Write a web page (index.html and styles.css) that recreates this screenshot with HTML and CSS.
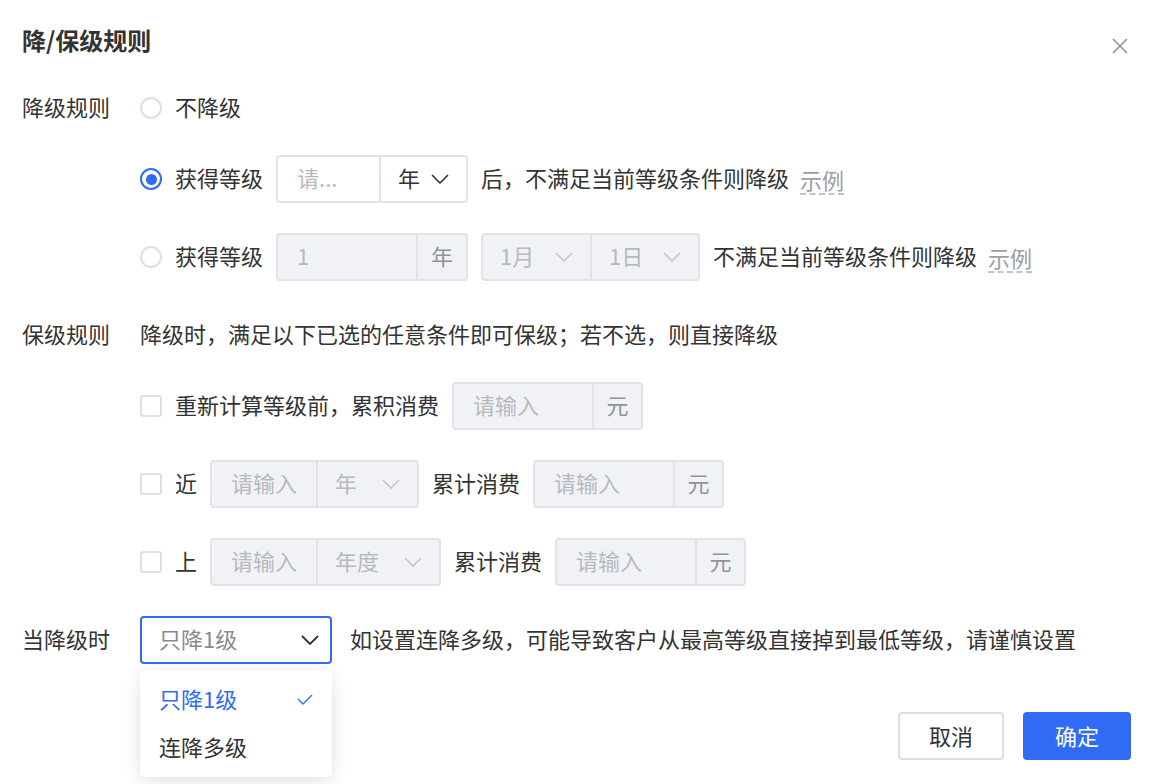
FILE: index.html
```html
<!DOCTYPE html>
<html lang="zh-CN">
<head>
  <meta charset="UTF-8" />
  <title>降/保级规则</title>
  <link rel="stylesheet" href="styles.css">
</head>
<body>
  <div class="dialog">
    <div class="header">
      <h2>降/保级规则</h2>
      <span class="close">
        <svg width="16" height="16" viewBox="0 0 16 16"><path d="M1 1L15 15M15 1L1 15" stroke="#8d929b" stroke-width="1.6" fill="none"/></svg>
      </span>
    </div>

    <div class="form-item item-down">
      <div class="label">降级规则</div>
      <div class="content">
        <div class="line">
          <span class="radio"></span><span class="txt">不降级</span>
        </div>
        <div class="line tall">
          <span class="radio checked"></span><span class="txt">获得等级</span>
          <div class="group">
            <span class="field placeholder" style="width:105px">请...</span>
            <span class="field select" style="width:89px">年<svg class="chev" width="18" height="10" viewBox="0 0 18 10"><path d="M1 1L9 9L17 1" stroke="#333" stroke-width="1.6" fill="none"/></svg></span>
          </div>
          <span class="txt">后，不满足当前等级条件则降级</span>
          <span class="example">示例</span>
        </div>
        <div class="line tall">
          <span class="radio"></span><span class="txt">获得等级</span>
          <div class="group disabled">
            <span class="field" style="width:142px">1</span>
            <span class="field addon" style="width:52px">年</span>
          </div>
          <div class="group disabled">
            <span class="field select" style="width:111px">1月<svg class="chev" width="18" height="10" viewBox="0 0 18 10"><path d="M1 1L9 9L17 1" stroke="#c3c6cc" stroke-width="1.6" fill="none"/></svg></span>
            <span class="field select" style="width:110px">1日<svg class="chev" width="18" height="10" viewBox="0 0 18 10"><path d="M1 1L9 9L17 1" stroke="#c3c6cc" stroke-width="1.6" fill="none"/></svg></span>
          </div>
          <span class="txt">不满足当前等级条件则降级</span>
          <span class="example">示例</span>
        </div>
      </div>
    </div>

    <div class="form-item item-keep">
      <div class="label">保级规则</div>
      <div class="content">
        <div class="line">
          <span class="txt">降级时，满足以下已选的任意条件即可保级；若不选，则直接降级</span>
        </div>
        <div class="line tall">
          <span class="checkbox"></span><span class="txt">重新计算等级前，累积消费</span>
          <div class="group disabled">
            <span class="field" style="width:142px">请输入</span>
            <span class="field addon" style="width:51px">元</span>
          </div>
        </div>
        <div class="line tall">
          <span class="checkbox"></span><span class="txt">近</span>
          <div class="group disabled">
            <span class="field" style="width:108px">请输入</span>
            <span class="field select" style="width:103px">年<svg class="chev" width="18" height="10" viewBox="0 0 18 10"><path d="M1 1L9 9L17 1" stroke="#c3c6cc" stroke-width="1.6" fill="none"/></svg></span>
          </div>
          <span class="txt">累计消费</span>
          <div class="group disabled">
            <span class="field" style="width:142px">请输入</span>
            <span class="field addon" style="width:51px">元</span>
          </div>
        </div>
        <div class="line tall">
          <span class="checkbox"></span><span class="txt">上</span>
          <div class="group disabled">
            <span class="field" style="width:108px">请输入</span>
            <span class="field select" style="width:125px">年度<svg class="chev" width="18" height="10" viewBox="0 0 18 10"><path d="M1 1L9 9L17 1" stroke="#c3c6cc" stroke-width="1.6" fill="none"/></svg></span>
          </div>
          <span class="txt">累计消费</span>
          <div class="group disabled">
            <span class="field" style="width:142px">请输入</span>
            <span class="field addon" style="width:51px">元</span>
          </div>
        </div>
      </div>
    </div>

    <div class="form-item item-when">
      <div class="label tall">当降级时</div>
      <div class="content">
        <div class="line tall">
          <div class="select-wrap">
            <span class="level-select">只降1级<svg width="18" height="10" viewBox="0 0 18 10"><path d="M1 1L9 9L17 1" stroke="#333" stroke-width="1.8" fill="none"/></svg></span>
            <div class="dropdown">
              <div class="option active">只降1级<svg width="16" height="11" viewBox="0 0 16 11"><path d="M1 5L6 10L15 1" stroke="#2f6bf5" stroke-width="1.4" fill="none"/></svg></div>
              <div class="option">连降多级</div>
            </div>
          </div>
          <span class="txt hint">如设置连降多级，可能导致客户从最高等级直接掉到最低等级，请谨慎设置</span>
        </div>
      </div>
    </div>

    <div class="footer">
      <button class="btn cancel">取消</button>
      <button class="btn primary">确定</button>
    </div>
  </div>
</body>
</html>
```

FILE: styles.css
```css
body {
  margin: 0;
  min-height: 784px;
  font-family: "Noto Sans CJK SC", "Noto Sans", sans-serif;
  font-size: 22px;
  color: #333;
  background-color: #fff;
}
.dialog {
  padding: 25px 23px 0 22px;
}
.header {
  display: flex;
  justify-content: space-between;
  align-items: flex-start;
  height: 34px;
}
.header h2 {
  margin: 0;
  font-size: 24px;
  font-weight: 700;
  line-height: 30px;
}
.close {
  display: flex;
  margin-top: 13px;
  margin-right: 3px;
}
.form-item {
  display: flex;
}
.item-down {
  margin-top: 32px;
}
.item-keep {
  margin-top: 37px;
}
.item-when {
  margin-top: 30px;
}
.label {
  width: 118px;
  flex: none;
  height: 34px;
  line-height: 30px;
}
.label.tall {
  height: 48px;
  line-height: 44px;
}
.content {
  display: flex;
  flex-direction: column;
  gap: 30px;
}
.line {
  display: flex;
  align-items: center;
  gap: 13px;
  height: 34px;
  white-space: nowrap;
}
.line.tall {
  height: 48px;
}
.txt {
  padding-bottom: 4px;
}
.radio {
  width: 22px;
  height: 22px;
  border: 2px solid #dcdfe6;
  border-radius: 50%;
  box-sizing: border-box;
  flex: none;
  display: flex;
  align-items: center;
  justify-content: center;
}
.radio.checked {
  border-color: #2f6bf5;
}
.radio.checked::after {
  content: '';
  width: 11px;
  height: 11px;
  border-radius: 50%;
  background-color: #2f6bf5;
}
.checkbox {
  width: 22px;
  height: 22px;
  border: 2px solid #dcdfe6;
  border-radius: 3px;
  box-sizing: border-box;
  flex: none;
}
.group {
  display: flex;
  height: 48px;
}
.field {
  box-sizing: border-box;
  height: 48px;
  border: 2px solid #e1e3e8;
  display: flex;
  align-items: center;
  justify-content: space-between;
  padding: 0 17px 4px 19px;
  background-color: #fff;
}
.field svg {
  margin-top: 4px;
}
.field + .field {
  margin-left: -2px;
}
.field:first-child {
  border-radius: 4px 0 0 4px;
}
.field:last-child {
  border-radius: 0 4px 4px 0;
}
.field.placeholder {
  color: #b5b9c1;
}
.field.select {
  padding-left: 17px;
}
.field.addon {
  justify-content: center;
  padding: 0 0 4px;
}
.group.disabled .field {
  background-color: #f1f2f5;
  color: #b5b9c1;
}
.group.disabled .field.addon {
  color: #8f939b;
}
.example {
  color: #9a9ea7;
  border-bottom: 2px dashed #c0c3c9;
  line-height: 27px;
  margin-top: 2px;
  margin-left: -2px;
}
.select-wrap {
  position: relative;
}
.level-select {
  box-sizing: border-box;
  width: 192px;
  height: 48px;
  border: 2px solid #2f6bf5;
  border-radius: 4px;
  display: flex;
  align-items: center;
  justify-content: space-between;
  padding: 0 11px 4px 17px;
  color: #8a8a8a;
}
.level-select svg {
  margin-top: 4px;
}
.dropdown {
  position: absolute;
  top: 54px;
  left: 0;
  width: 192px;
  padding: 6px 0 5px;
  background-color: #fff;
  border-radius: 6px;
  box-shadow: 0 4px 18px rgba(0, 0, 0, 0.12);
  z-index: 10;
}
.option {
  box-sizing: border-box;
  height: 48px;
  display: flex;
  align-items: center;
  justify-content: space-between;
  padding: 0 19px 4px;
}
.option svg {
  margin-top: 2px;
}
.option.active {
  color: #2f6bf5;
}
.hint {
  margin-left: 5px;
}
.footer {
  display: flex;
  justify-content: flex-end;
  gap: 19px;
  margin-top: 48px;
}
.btn {
  height: 48px;
  border-radius: 4px;
  font-family: inherit;
  font-size: 22px;
  padding-bottom: 4px;
  cursor: pointer;
}
.btn.cancel {
  width: 106px;
  border: 2px solid #dcdfe6;
  background-color: #fff;
  color: #333;
}
.btn.primary {
  width: 108px;
  border: none;
  background-color: #2f6bf5;
  color: #fff;
}
```
